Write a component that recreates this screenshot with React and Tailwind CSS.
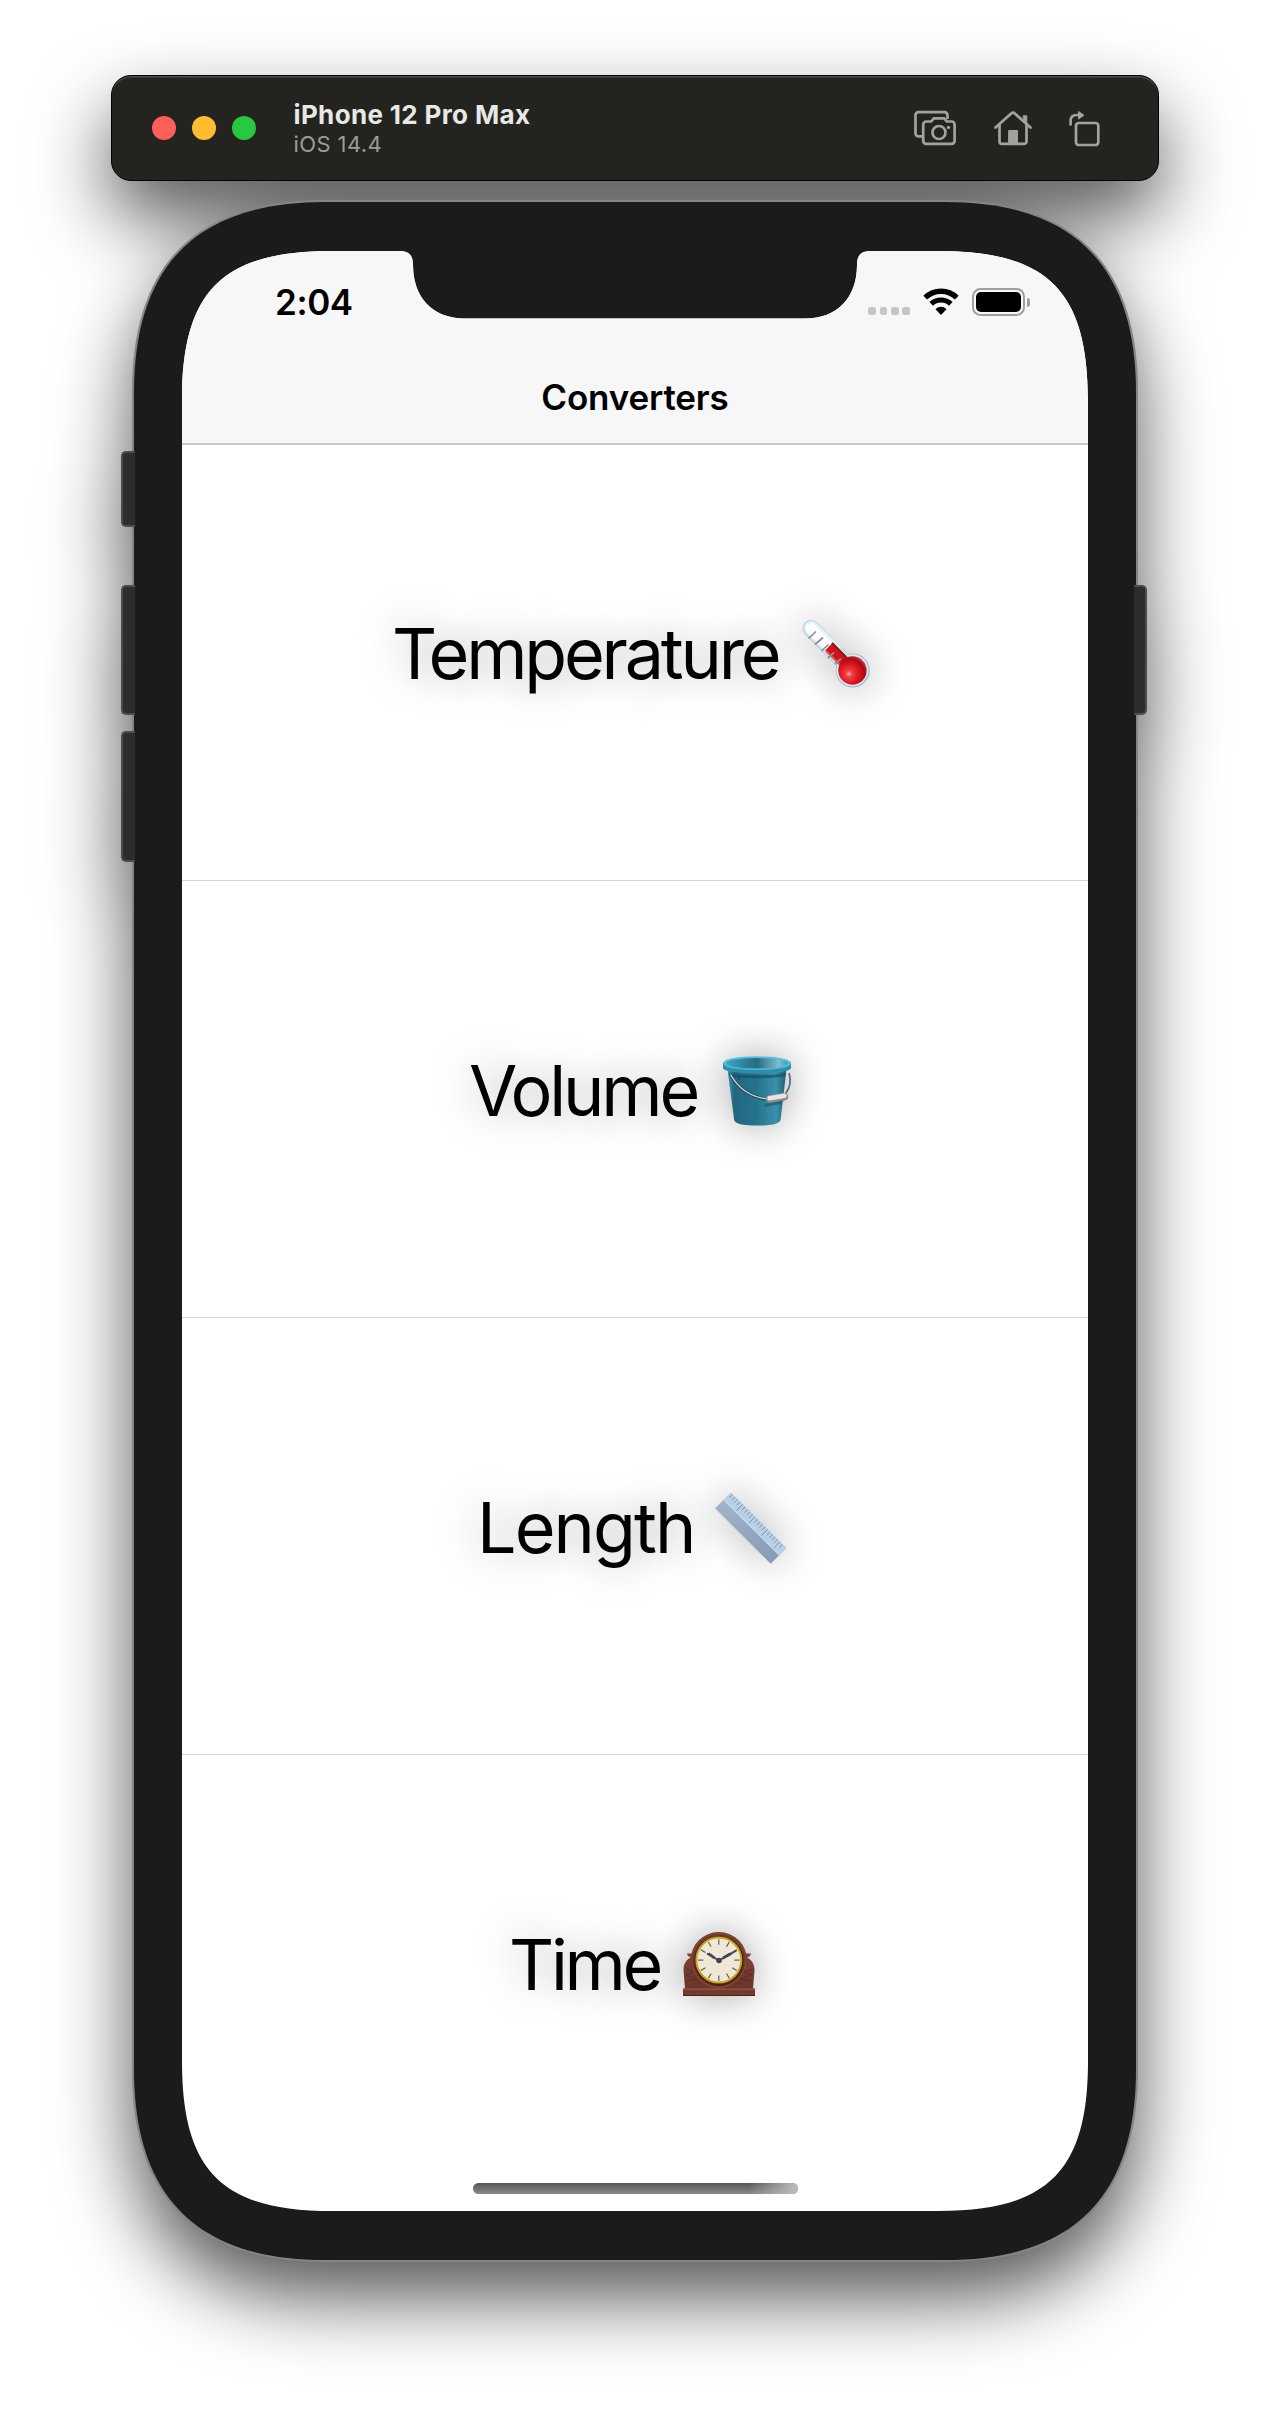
import React from "react";

const Thermometer = () => (
  <svg viewBox="0 0 76 76" className="size-full">
    <defs>
      <radialGradient id="bulb" cx="0.38" cy="0.62" r="0.7">
        <stop offset="0" stopColor="#ffb0ae" />
        <stop offset="0.16" stopColor="#f0403f" />
        <stop offset="0.5" stopColor="#dc1420" />
        <stop offset="0.8" stopColor="#a80c14" />
        <stop offset="1" stopColor="#e04a50" />
      </radialGradient>
    </defs>
    <path d="M13 12.5L54.7 54.5" stroke="#b9cfdb" strokeWidth="17" strokeLinecap="round" />
    <circle cx="54.7" cy="54.5" r="17" fill="#a9b9c3" />
    <circle cx="54.4" cy="54.2" r="16" fill="#d6ebf5" />
    <path d="M13 12.5L50 49.5" stroke="#cfe9f6" strokeWidth="15" strokeLinecap="round" />
    <path d="M13 12.5L32 31.5" stroke="#fff" strokeWidth="11" strokeLinecap="round" />
    <path d="M31 30.5L50 49.5" stroke="#d2131c" strokeWidth="11" />
    <path d="M34 27L48 41" stroke="#8e1a22" strokeWidth="2" />
    <path d="M28 35L44 51" stroke="#ee5559" strokeWidth="2" />
    <circle cx="54.5" cy="54.5" r="14.2" fill="url(#bulb)" />
    <path d="M10.5 22.5l7.5-7M17 28.5l8-7M23.5 35l7-6.5M30 42l6-5.5M37 48l6-5.5" stroke="#8d8c92" strokeWidth="1.7" />
    <path d="M7.5 12a6 6 0 0 1 10-4.500L43 32" stroke="#eefaff" strokeWidth="1.300" fill="none" />
  </svg>
);

const Bucket = () => (
  <svg viewBox="0 0 76 76" className="size-full">
    <defs>
      <linearGradient id="pail" x1="0" x2="1">
        <stop offset="0" stopColor="#3b95ad" />
        <stop offset="0.12" stopColor="#20677f" />
        <stop offset="0.5" stopColor="#25748c" />
        <stop offset="0.82" stopColor="#3991ad" />
        <stop offset="1" stopColor="#205e74" />
      </linearGradient>
      <linearGradient id="pailInside" x1="0" x2="1">
        <stop offset="0" stopColor="#3ba5c4" />
        <stop offset="0.5" stopColor="#276b80" />
        <stop offset="0.85" stopColor="#80bdcb" />
        <stop offset="1" stopColor="#38a0bf" />
      </linearGradient>
    </defs>
    <path d="M68 20c2 7 1.500 14-3 20" stroke="#4c7080" strokeWidth="1.700" fill="none" />
    <path d="M6.500 16L13 66c.5 4 5 6.500 23.500 6.500S59 70 59.700 66L65.500 16z" fill="url(#pail)" />
    <path d="M8 20c8 3 48 3 57 0l-.5 3c-12 3-45 3-56 0z" fill="#174f63" opacity="0.7" />
    <path d="M17 22h2v5h-2z" fill="#1b5469" />
    <path d="M2 9.500v6c5 6.500 62 7 68 0v-6z" fill="#2d8eab" />
    <ellipse cx="36" cy="10" rx="34" ry="6.700" fill="#4fc0df" />
    <ellipse cx="36" cy="10.300" rx="31" ry="5.300" fill="url(#pailInside)" />
    <path d="M3 12c9 5.500 57 6 66 0" stroke="#49b4d1" strokeWidth="1.200" fill="none" />
    <path d="M9.500 21.500C16 33 27 44 47 46.500" stroke="#24495a" strokeWidth="3" fill="none" />
    <path d="M9.500 21.500C16 33 27 44 47 46" stroke="#c9d6dc" strokeWidth="1.400" fill="none" />
    <path d="M44 51l19-4-3 4-17 3z" fill="#185064" opacity="0.6" />
    <path d="M48.500 46l15-2.500" stroke="#8e8b8b" strokeWidth="7.400" strokeLinecap="round" />
    <path d="M48.500 45.300l15-2.500" stroke="#e9e5e4" strokeWidth="4.500" strokeLinecap="round" />
  </svg>
);

const Ruler = () => (
  <svg viewBox="0 0 76 76" className="size-full">
    <defs>
      <linearGradient id="rulerSide" x1="0" y1="0" x2="1" y2="1">
        <stop offset="0" stopColor="#a3b6cb" />
        <stop offset="1" stopColor="#8799b3" />
      </linearGradient>
    </defs>
    <path d="M18 2.700L73.200 58.200L57.700 73.700L2 18.300z" fill="url(#rulerSide)" />
    <path d="M18 2.700L73.200 58.200L66.500 65L10.800 9.900z" fill="#b8cfe8" />
    <path d="M10.800 9.900L66.500 65" stroke="#c9dbee" strokeWidth="1.300" />
    {Array.from({ length: 21 }, (_, i) => {
      const p = i * 2.5;
      const l = i % 5 === 4 ? 6 : 3.2;
      return (
        <path key={i} d={`M${19.5 + p} ${4.5 + p}l${-l} ${l}`} stroke="#7189a5" strokeWidth="0.8" />
      );
    })}
  </svg>
);

const Clock = () => (
  <svg viewBox="0 0 76 76" className="size-full">
    <defs>
      <linearGradient id="wood" x1="0" y1="0" x2="0" y2="1">
        <stop offset="0" stopColor="#7e4436" />
        <stop offset="1" stopColor="#6b3529" />
      </linearGradient>
    </defs>
    <path d="M6 26.500h5v-1h54v1h5c-.5 2.500-2 3.500-4 3.800 5 3 7.500 7 7.500 13L72 62H4L2.500 43c0-6 2.500-10 7.500-13-2.500-.3-3.700-1.300-4-3.500z" fill="url(#wood)" />
    <path d="M4 42l10 3-9 3 12 4-12 2M72 42l-10 3 9 3-12 4 12 2M14 56l18-1 15 3 14-2" stroke="#552920" strokeWidth="0.7" fill="none" />
    <circle cx="37.800" cy="33.300" r="28.200" fill="#6f382c" />
    <circle cx="37.800" cy="33.300" r="27" fill="none" stroke="#8a4c3c" strokeWidth="1" />
    <circle cx="37.800" cy="34" r="24.800" fill="#472018" />
    <path d="M2 61.500h72V69H2z" fill="#733a2d" />
    <path d="M2 62.200h72" stroke="#955849" strokeWidth="1.200" />
    <path d="M2 68.500h72" stroke="#4e2219" strokeWidth="1" />
    <circle cx="37.800" cy="33.100" r="22.500" fill="#efe8d7" stroke="#c9a51b" strokeWidth="2" />
    <g stroke="#53585a" strokeWidth="1.100">
      {Array.from({ length: 12 }, (_, i) => (
        <path key={i} d="M37.800 12.300v5.400" transform={`rotate(${i * 30} 37.8 33.1)`} />
      ))}
    </g>
    <path d="M38 33.500L26 26.500M38 33.500L55.500 23.500" stroke="#3e474d" strokeWidth="2" />
    <path d="M33.500 31l-6-4.500M42 31l8-4.500" stroke="#3e474d" strokeWidth="2.800" />
    <circle cx="38" cy="33.500" r="2.800" fill="#3e474d" />
  </svg>
);

const rows = [
  { label: "Temperature", Icon: Thermometer, width: "w-[402px]", tracking: "tracking-[-3.2px]" },
  { label: "Volume", Icon: Bucket, width: "w-[248px]", tracking: "tracking-[-3.2px]" },
  { label: "Length", Icon: Ruler, width: "w-[232px]", tracking: "tracking-[-1.9px]" },
  { label: "Time", Icon: Clock, width: "w-[168px]", tracking: "tracking-[-3.3px]" },
];

const ConverterRow = ({ label, Icon, width, tracking }) => (
  <li className="flex h-[437px] shrink-0 items-center justify-center border-b border-[#d4d4d6] pb-[17px] last:border-b-0">
    <span
      className={`${width} ${tracking} whitespace-nowrap -indent-1 text-[70px] leading-[84px] text-black [text-shadow:0_0_44px_rgba(0,0,0,0.36)]`}
    >
      {label}
    </span>
    <span className="size-[76px] drop-shadow-[0_0_20px_rgba(0,0,0,0.34)]">
      <Icon />
    </span>
  </li>
);

const TitleBar = () => (
  <header className="flex h-[106px] w-[1048px] items-center rounded-[20px] border border-black bg-[#23241f] pl-[40px] pr-[58px] shadow-[inset_0_1.5px_0_#4c4d48]">
    <div className="flex gap-4">
      <span className="size-6 rounded-full bg-[#ff5f57]" />
      <span className="size-6 rounded-full bg-[#febc2e]" />
      <span className="size-6 rounded-full bg-[#28c840]" />
    </div>
    <div className="ml-[37.5px] mt-[2px] flex flex-1 flex-col">
      <span className="text-[26px] font-bold leading-[30px] tracking-[0.35px] text-[#e8e8e7]">iPhone 12 Pro Max</span>
      <span className="text-[22px] leading-[28px] tracking-[0.4px] text-[#9b9b97]">iOS 14.4</span>
    </div>
    <div className="flex items-center text-[#a3a39e]">
      <svg width="42" height="36" viewBox="0 0 42 36" fill="none" stroke="currentColor" strokeWidth="2.700" strokeLinejoin="round">
        <path d="M8 26.300H4.500a3 3 0 0 1-3-3V5.200a3 3 0 0 1 3-3h26a3 3 0 0 1 3 3V9" />
        <path d="M9.200 14.500a3 3 0 0 1 3-3h5l2.600-3.200h10.400l2.600 3.200h4.800a3 3 0 0 1 3 3v16.300a3 3 0 0 1-3 3H12.200a3 3 0 0 1-3-3z" />
        <circle cx="25" cy="22.500" r="6.500" />
        <circle cx="34.500" cy="17.400" r="1.700" fill="currentColor" stroke="none" />
      </svg>
      <svg className="ml-[38px]" width="38" height="36" viewBox="0 0 38 36" fill="none" stroke="currentColor" strokeWidth="2.700" strokeLinejoin="round" strokeLinecap="round">
        <path d="M1.500 17.500L17.200 3.500a2.600 2.600 0 0 1 3.600 0L36.500 17.500" />
        <path d="M5.500 15v16.500a2.300 2.300 0 0 0 2.300 2.300h22.400a2.300 2.300 0 0 0 2.300-2.300V15" />
        <path d="M29.500 5.800h3.300v8l-3.300-2.800z" fill="currentColor" strokeWidth="1" />
        <path d="M15 20.500h8.500v13H15z" fill="currentColor" strokeWidth="1" />
      </svg>
      <svg className="ml-[37px]" width="31" height="37" viewBox="0 0 31 37" fill="none" stroke="currentColor" strokeWidth="2.700">
        <rect x="7" y="13" width="22.300" height="22" rx="2.800" />
        <path d="M1.600 14.500V11c0-4 2.400-6 6-6H10" strokeLinecap="round" />
        <path d="M9.500 1.500l5.500 3.700-5.500 3.800z" fill="currentColor" strokeWidth="1" strokeLinejoin="round" />
      </svg>
    </div>
  </header>
);

const StatusBar = () => (
  <div className="flex h-[103px] items-start justify-between pl-[93px] pr-[58px] pt-[30px]">
    <time className="text-[35px] font-semibold leading-[42px] tracking-[-0.4px]">2:04</time>
    <div className="mt-[7px] flex h-[29px] items-start">
      <div className="mr-[13px] mt-[19px] flex gap-[3.700px]">
        {[0, 1, 2, 3].map((i) => (
          <span key={i} className="size-[7.700px] rounded-[2.500px] bg-[#c6c6c6]" />
        ))}
      </div>
      <svg className="mr-[13px]" width="36" height="28" viewBox="0 0 36 28" fill="none" stroke="#000">
        <path d="M2.200 9.700C11 1.100 25 1.100 33.800 9.700" strokeWidth="5.300" />
        <path d="M8.200 15.900C13.500 10.700 22.500 10.700 27.800 15.900" strokeWidth="5.200" />
        <path d="M12.500 21.300c3-3.300 8-3.300 11 0L18 27z" fill="#000" stroke="none" />
      </svg>
      <div className="flex items-center">
        <div className="h-[28px] w-[53px] rounded-[8.500px] border-2 border-[#9f9f9f] p-[2px]">
          <div className="size-full rounded-[5px] bg-black" />
        </div>
        <div className="ml-[2px] h-[9px] w-[3px] rounded-r-full bg-[#9f9f9f]" />
      </div>
    </div>
  </div>
);

const Phone = () => (
  <div className="relative mt-[19px] h-[2062px] w-[1006px]">
    <div className="size-full bg-[#858585] p-[2px] [clip-path:path('M0_192C0_64_64_0_192_0H814C942_0_1006_64_1006_192V1870C1006_1998_942_2062_814_2062H192C64_2062_0_1998_0_1870Z')]">
      <div className="size-full bg-[#1b1b1b] px-[48px] py-[49px] [clip-path:path('M0_191C0_63_63_0_191_0H811C939_0_1002_63_1002_191V1867C1002_1995_939_2058_811_2058H191C63_2058_0_1995_0_1867Z')]">
        <main className="relative flex h-[1960px] w-[906px] flex-col overflow-hidden bg-white text-black [clip-path:path('M0_150C0_40_40_0_150_0H217C227_0_231_4_231_14C231_46_250_67.500_283_67.500H623C656_67.500_675_46_675_14C675_4_679_0_689_0H756C866_0_906_40_906_150V1810C906_1920_866_1960_756_1960H150C40_1960_0_1920_0_1810Z')]">
          <div className="z-10 h-[194px] shrink-0 border-b-2 border-[#c8c8c8] bg-[#f7f7f7]">
            <StatusBar />
            <h1 className="mt-[22px] text-center text-[35px] font-semibold leading-[42px] tracking-[-0.15px]">Converters</h1>
          </div>
          <ul className="-mt-px flex min-h-0 flex-1 flex-col overflow-hidden">
            {rows.map((row) => (
              <ConverterRow key={row.label} {...row} />
            ))}
          </ul>
          <div className="absolute bottom-[17px] left-[291px] h-[11px] w-[325px] overflow-hidden rounded-full bg-linear-to-b from-[#565656] to-[#8a8a8a]">
            <div className="ml-auto h-full w-[50px] bg-linear-to-r from-transparent to-[#bdbdbd]" />
          </div>
        </main>
      </div>
    </div>
    <div className="absolute -left-[11px] top-[251px] h-[76px] w-[14px] rounded-l-[5px] border-2 border-r-0 border-[#4c4c4c] bg-[#2d2d2d]" />
    <div className="absolute -left-[11px] top-[385px] h-[130px] w-[14px] rounded-l-[5px] border-2 border-r-0 border-[#4c4c4c] bg-[#2d2d2d]" />
    <div className="absolute -left-[11px] top-[531px] h-[131px] w-[14px] rounded-l-[5px] border-2 border-r-0 border-[#4c4c4c] bg-[#2d2d2d]" />
    <div className="absolute -right-[9px] top-[385px] h-[130px] w-[13px] rounded-r-[5px] border-2 border-l-0 border-[#4c4c4c] bg-[#2d2d2d]" />
  </div>
);

export default function App() {
  return (
    <div className="h-[2410px] w-[1270px] overflow-hidden bg-white font-['Inter',sans-serif]">
      <div className="flex h-full flex-col items-center pt-[75px] [filter:drop-shadow(0_36px_38px_rgba(0,0,0,0.66))]">
        <TitleBar />
        <Phone />
      </div>
    </div>
  );
}
